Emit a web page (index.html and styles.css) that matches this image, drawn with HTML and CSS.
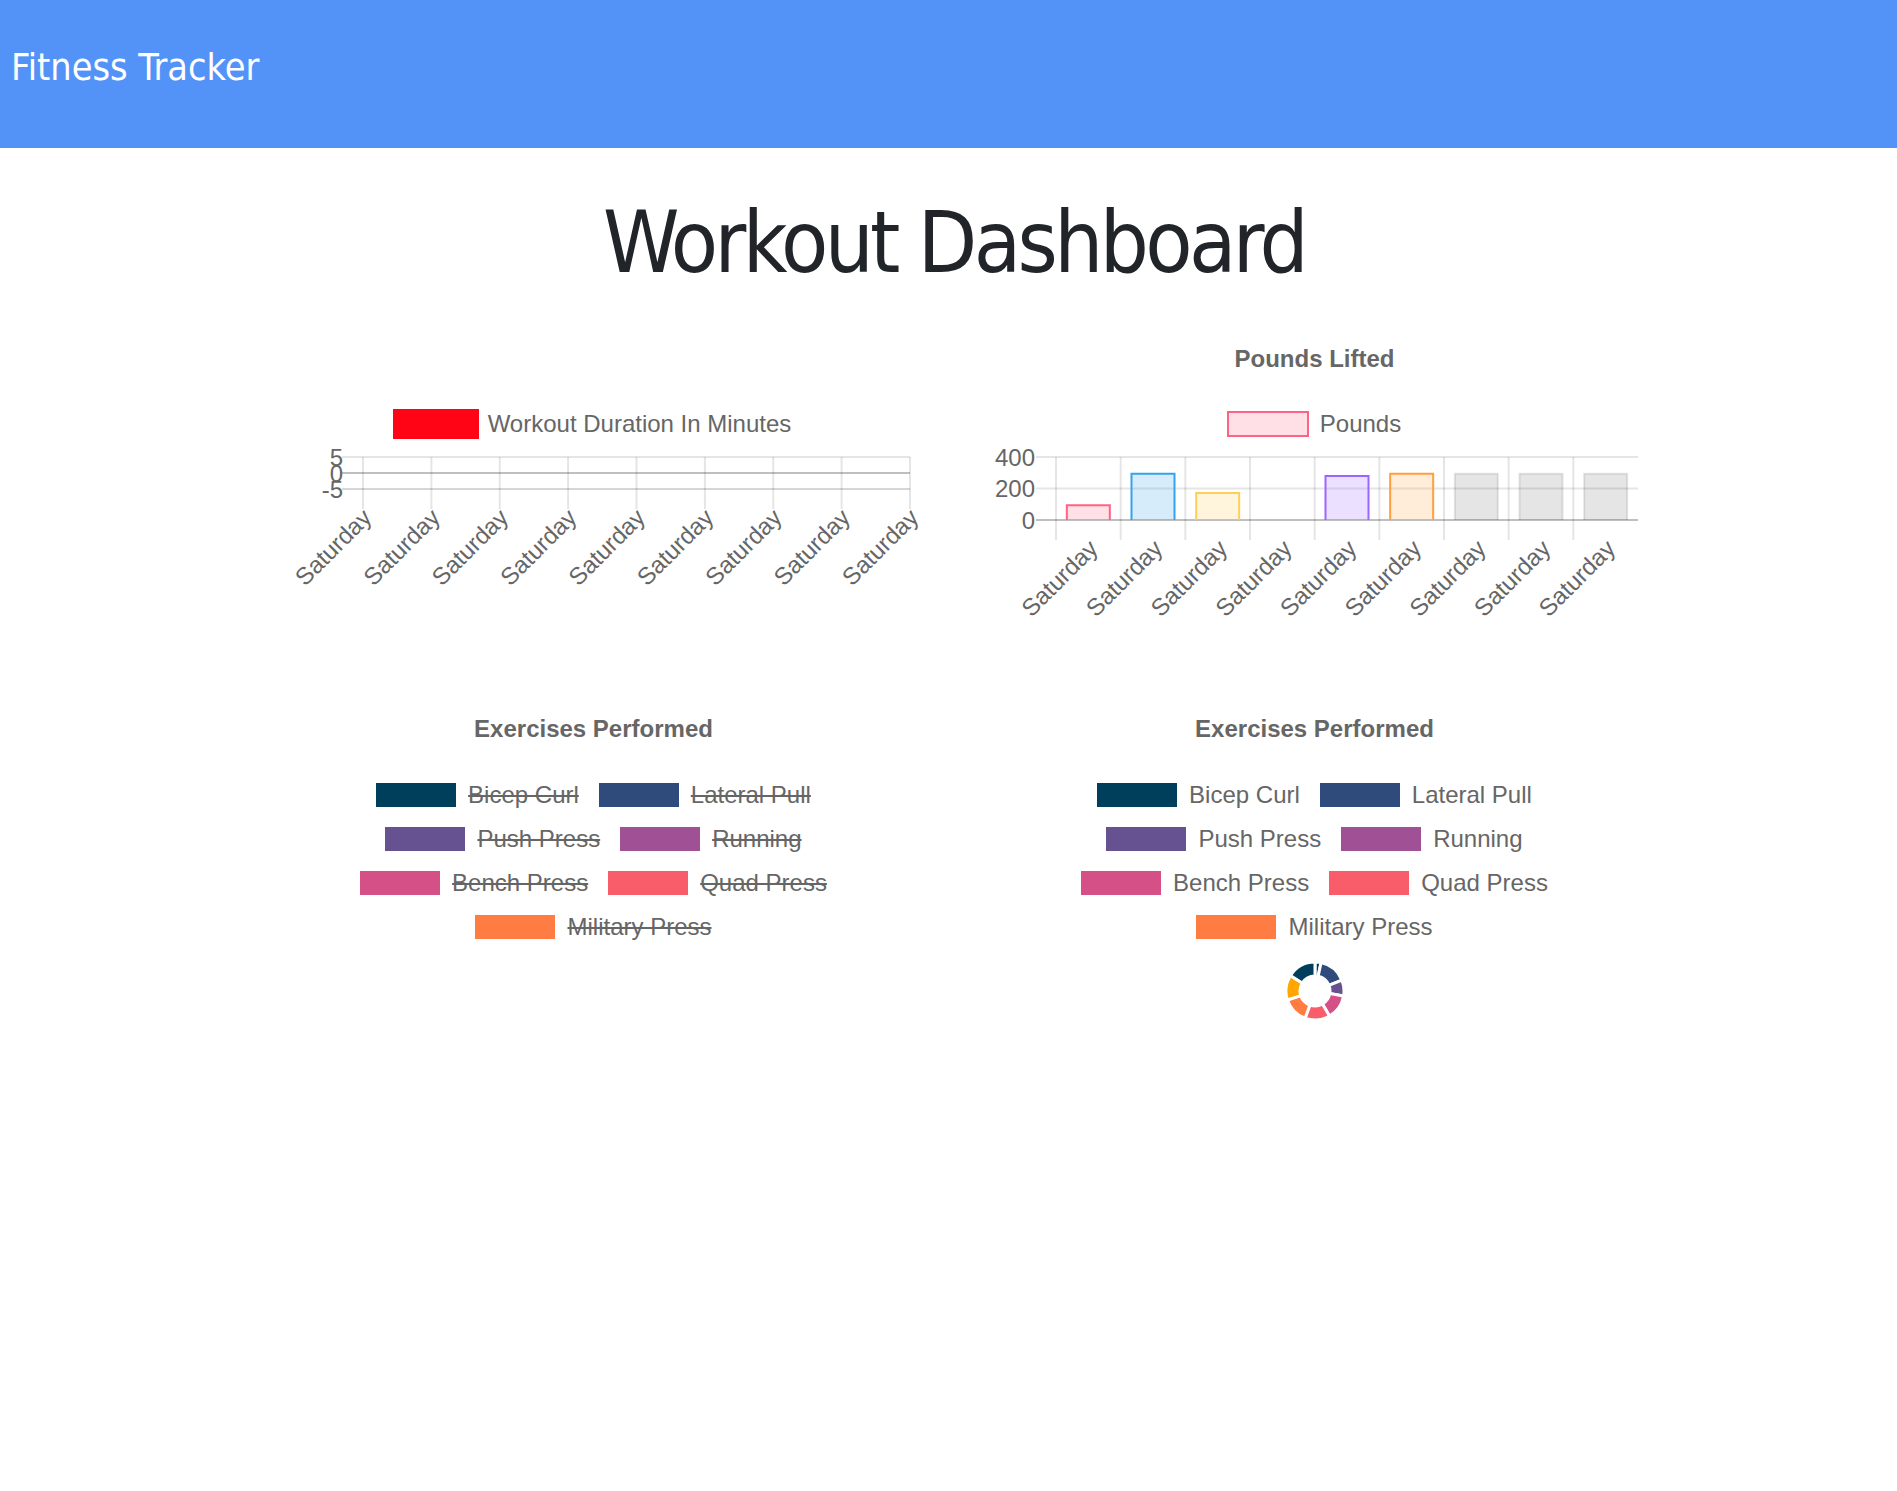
FILE: index.html
```html
<!DOCTYPE html>
<html lang="en">
<head>
<meta charset="utf-8">
<title>Fitness Tracker</title>
<link rel="stylesheet" href="styles.css">
</head>
<body>
<header class="topbar"><div class="brand">Fitness Tracker</div></header>
<h1 class="page-title">Workout Dashboard</h1>
<main class="charts">
  <section class="chart chart-duration">
    <div class="legend">
      <div class="legend-item"><span class="swatch swatch-red"></span><span class="legend-label">Workout Duration In Minutes</span></div>
    </div>
    <svg class="plot" viewBox="0 0 721 190" width="721" height="190">
      <g class="grid">
        <line x1="109" y1="12" x2="677" y2="12"/>
        <line x1="109" y1="44" x2="677" y2="44" class="grid-border"/>
        <line x1="130" y1="12" x2="130" y2="64"/>
        <line x1="198.4" y1="12" x2="198.4" y2="64"/>
        <line x1="266.75" y1="12" x2="266.75" y2="64"/>
        <line x1="335.1" y1="12" x2="335.1" y2="64"/>
        <line x1="403.5" y1="12" x2="403.5" y2="64"/>
        <line x1="471.9" y1="12" x2="471.9" y2="64"/>
        <line x1="540.25" y1="12" x2="540.25" y2="64"/>
        <line x1="608.6" y1="12" x2="608.6" y2="64"/>
        <line x1="677" y1="12" x2="677" y2="64"/>
        <line x1="109" y1="28" x2="677" y2="28" class="grid-zero"/>
      </g>
      <g class="axis-label y-label">
        <text x="110" y="12">5</text>
        <text x="110" y="28">0</text>
        <text x="110" y="44">-5</text>
      </g>
      <g class="axis-label x-label">
        <text transform="translate(140 74) rotate(-45)">Saturday</text>
        <text transform="translate(208.4 74) rotate(-45)">Saturday</text>
        <text transform="translate(276.75 74) rotate(-45)">Saturday</text>
        <text transform="translate(345.1 74) rotate(-45)">Saturday</text>
        <text transform="translate(413.5 74) rotate(-45)">Saturday</text>
        <text transform="translate(481.9 74) rotate(-45)">Saturday</text>
        <text transform="translate(550.25 74) rotate(-45)">Saturday</text>
        <text transform="translate(618.6 74) rotate(-45)">Saturday</text>
        <text transform="translate(687 74) rotate(-45)">Saturday</text>
      </g>
    </svg>
  </section>

  <section class="chart chart-pounds">
    <h2 class="chart-title">Pounds Lifted</h2>
    <div class="legend">
      <div class="legend-item"><span class="swatch swatch-pounds"></span><span class="legend-label">Pounds</span></div>
    </div>
    <svg class="plot" viewBox="0 0 721 190" width="721" height="190">
      <g class="grid">
        <line x1="82" y1="12" x2="684" y2="12"/>
        <line x1="82" y1="43.5" x2="684" y2="43.5"/>
        <line x1="102" y1="12" x2="102" y2="95"/>
        <line x1="166.67" y1="12" x2="166.67" y2="95"/>
        <line x1="231.33" y1="12" x2="231.33" y2="95"/>
        <line x1="296" y1="12" x2="296" y2="95"/>
        <line x1="360.67" y1="12" x2="360.67" y2="95"/>
        <line x1="425.33" y1="12" x2="425.33" y2="95"/>
        <line x1="490" y1="12" x2="490" y2="95"/>
        <line x1="554.67" y1="12" x2="554.67" y2="95"/>
        <line x1="619.33" y1="12" x2="619.33" y2="95"/>
        <line x1="82" y1="75" x2="684" y2="75" class="grid-zero"/>
      </g>
      <g class="bars">
        <path class="bar bar-pink" d="M112.83 75V60.25H155.83V75"/>
        <path class="bar bar-blue" d="M177.5 75V28.75H220.5V75"/>
        <path class="bar bar-yellow" d="M242.17 75V47.97H285.17V75"/>
        <path class="bar bar-purple" d="M371.5 75V31.1H414.5V75"/>
        <path class="bar bar-orange" d="M436.17 75V28.75H479.17V75"/>
        <path class="bar bar-grey" d="M500.83 75V28.75H543.83V75"/>
        <path class="bar bar-grey" d="M565.5 75V28.75H608.5V75"/>
        <path class="bar bar-grey" d="M630.17 75V28.75H673.17V75"/>
      </g>
      <g class="axis-label y-label">
        <text x="81" y="12">400</text>
        <text x="81" y="43.5">200</text>
        <text x="81" y="75">0</text>
      </g>
      <g class="axis-label x-label">
        <text transform="translate(145.33 105) rotate(-45)">Saturday</text>
        <text transform="translate(210 105) rotate(-45)">Saturday</text>
        <text transform="translate(274.67 105) rotate(-45)">Saturday</text>
        <text transform="translate(339.33 105) rotate(-45)">Saturday</text>
        <text transform="translate(404 105) rotate(-45)">Saturday</text>
        <text transform="translate(468.67 105) rotate(-45)">Saturday</text>
        <text transform="translate(533.33 105) rotate(-45)">Saturday</text>
        <text transform="translate(598 105) rotate(-45)">Saturday</text>
        <text transform="translate(662.67 105) rotate(-45)">Saturday</text>
      </g>
    </svg>
  </section>

  <section class="chart chart-exercises">
    <h2 class="chart-title">Exercises Performed</h2>
    <div class="legend legend-wide legend-struck">
      <div class="legend-item"><span class="swatch sw-1"></span><span class="legend-label">Bicep Curl</span></div>
      <div class="legend-item"><span class="swatch sw-2"></span><span class="legend-label">Lateral Pull</span></div>
      <div class="legend-item"><span class="swatch sw-3"></span><span class="legend-label">Push Press</span></div>
      <div class="legend-item"><span class="swatch sw-4"></span><span class="legend-label">Running</span></div>
      <div class="legend-item"><span class="swatch sw-5"></span><span class="legend-label">Bench Press</span></div>
      <div class="legend-item"><span class="swatch sw-6"></span><span class="legend-label">Quad Press</span></div>
      <div class="legend-item"><span class="swatch sw-7"></span><span class="legend-label">Military Press</span></div>
    </div>
  </section>

  <section class="chart chart-exercises">
    <h2 class="chart-title">Exercises Performed</h2>
    <div class="legend legend-wide">
      <div class="legend-item"><span class="swatch sw-1"></span><span class="legend-label">Bicep Curl</span></div>
      <div class="legend-item"><span class="swatch sw-2"></span><span class="legend-label">Lateral Pull</span></div>
      <div class="legend-item"><span class="swatch sw-3"></span><span class="legend-label">Push Press</span></div>
      <div class="legend-item"><span class="swatch sw-4"></span><span class="legend-label">Running</span></div>
      <div class="legend-item"><span class="swatch sw-5"></span><span class="legend-label">Bench Press</span></div>
      <div class="legend-item"><span class="swatch sw-6"></span><span class="legend-label">Quad Press</span></div>
      <div class="legend-item"><span class="swatch sw-7"></span><span class="legend-label">Military Press</span></div>
    </div>
    <svg class="donut" viewBox="0 0 60 60" width="60" height="60">
      <path class="seg seg-1" d="M30 1A29 29 0 0 1 36.03 1.63L33.12 15.33A15 15 0 0 0 30 15Z"/>
      <path class="seg seg-2" d="M36.03 1.63A29 29 0 0 1 56.89 19.14L43.91 24.38A15 15 0 0 0 33.12 15.33Z"/>
      <path class="seg seg-3" d="M56.89 19.14A29 29 0 0 1 58.56 35.03L44.77 32.6A15 15 0 0 0 43.91 24.38Z"/>
      <path class="seg seg-5" d="M58.56 35.03A29 29 0 0 1 44.5 55.11L37.5 42.99A15 15 0 0 0 44.77 32.6Z"/>
      <path class="seg seg-6" d="M44.5 55.11A29 29 0 0 1 20.08 57.25L24.87 44.1A15 15 0 0 0 37.5 42.99Z"/>
      <path class="seg seg-7" d="M20.08 57.25A29 29 0 0 1 2.42 38.96L15.73 34.64A15 15 0 0 0 24.87 44.1Z"/>
      <path class="seg seg-8" d="M2.42 38.96A29 29 0 0 1 5.41 14.63L17.28 22.05A15 15 0 0 0 15.73 34.64Z"/>
      <path class="seg seg-1" d="M5.41 14.63A29 29 0 0 1 30 1L30 15A15 15 0 0 0 17.28 22.05Z"/>
    </svg>
  </section>
</main>
</body>
</html>
```

FILE: styles.css
```css
html, body {
  margin: 0;
  padding: 0;
  background: #fff;
}

body {
  font-family: "Liberation Sans", Arial, sans-serif;
  color: #212529;
}

.topbar {
  height: 148px;
  box-sizing: border-box;
  padding: 45px 0 0 11px;
  background: #5393f8;
}

.brand {
  font-family: "DejaVu Sans Condensed", "DejaVu Sans", sans-serif;
  font-stretch: condensed;
  font-size: 37.5px;
  line-height: 44px;
  color: #fff;
}

.page-title {
  margin: 44px 0 0;
  padding-left: 11px;
  font-family: "DejaVu Sans Condensed", "DejaVu Sans", sans-serif;
  font-stretch: condensed;
  font-weight: 400;
  font-size: 86px;
  line-height: 100px;
  letter-spacing: -3.6px;
  text-align: center;
  color: #212529;
}

.charts {
  display: grid;
  grid-template-columns: 721px 721px;
  justify-content: center;
  align-items: start;
  row-gap: 80px;
  margin-top: 53px;
  padding-left: 11px;
}

.chart {
  display: flex;
  flex-direction: column;
  align-items: center;
}

.chart-title {
  margin: 0;
  font-size: 24px;
  line-height: 28px;
  font-weight: 700;
  color: #666;
}

.legend {
  display: flex;
  flex-wrap: wrap;
  justify-content: center;
  column-gap: 20px;
  row-gap: 20px;
  margin-top: 39px;
  max-width: 560px;
}

.chart-duration .legend {
  margin-top: 67px;
}

.chart-exercises .legend {
  margin-top: 40px;
}

.legend-item {
  display: flex;
  align-items: center;
  gap: 12px;
  height: 24px;
  font-size: 24px;
  line-height: 24px;
  color: #666;
  white-space: nowrap;
}

.swatch {
  flex: none;
  width: 80px;
  height: 24px;
}

.swatch-red {
  background: #ff0414;
  box-shadow: 0 0 0 3px #ff0414;
}

.swatch-pounds {
  background: rgba(255, 99, 132, 0.2);
  box-shadow: 0 0 0 1px #ff6384, inset 0 0 0 1px #ff6384;
}

.sw-1 { background: #003f5c; }
.sw-2 { background: #2f4b7c; }
.sw-3 { background: #665191; }
.sw-4 { background: #a05195; }
.sw-5 { background: #d45087; }
.sw-6 { background: #f95d6a; }
.sw-7 { background: #ff7c43; }

.legend-struck .legend-label {
  text-decoration: line-through;
  text-decoration-thickness: 2px;
  text-decoration-color: #666;
}

.plot {
  display: block;
  margin-top: 9px;
  width: 721px;
  height: 190px;
  overflow: visible;
}

.grid line {
  stroke: rgba(0, 0, 0, 0.1);
  stroke-width: 2;
}

.grid .grid-border {
  stroke: rgba(0, 0, 0, 0.16);
}

.grid .grid-zero {
  stroke: rgba(0, 0, 0, 0.25);
}

.axis-label {
  font-family: "Liberation Sans", Arial, sans-serif;
  font-size: 24px;
  fill: #666;
}

.y-label text {
  text-anchor: end;
  dominant-baseline: central;
}

.x-label text {
  text-anchor: end;
}

.bar {
  stroke-width: 2;
}

.bar-pink { fill: rgba(255, 99, 132, 0.2); stroke: #ff6384; }
.bar-blue { fill: rgba(54, 162, 235, 0.2); stroke: #36a2eb; }
.bar-yellow { fill: rgba(255, 206, 86, 0.2); stroke: #ffce56; }
.bar-purple { fill: rgba(153, 102, 255, 0.2); stroke: #9966ff; }
.bar-orange { fill: rgba(255, 159, 64, 0.2); stroke: #ff9f40; }
.bar-grey { fill: rgba(0, 0, 0, 0.1); stroke: rgba(0, 0, 0, 0.1); }

.donut {
  display: block;
  margin-top: 22px;
  width: 60px;
  height: 60px;
}

.seg {
  stroke: #fff;
  stroke-width: 3;
  stroke-linejoin: miter;
}

.seg-1 { fill: #003f5c; }
.seg-2 { fill: #2f4b7c; }
.seg-3 { fill: #665191; }
.seg-5 { fill: #d45087; }
.seg-6 { fill: #f95d6a; }
.seg-7 { fill: #ff7c43; }
.seg-8 { fill: #ffa600; }
```
